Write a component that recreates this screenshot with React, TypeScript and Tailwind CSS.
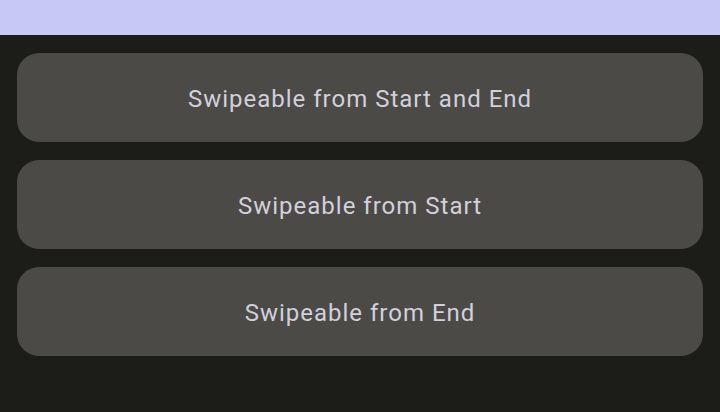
import React from 'react';

const items = [
    'Swipeable from Start and End',
    'Swipeable from Start',
    'Swipeable from End',
];

const App: React.FC = () => {
    return (
        <div className="w-[720px] h-[412px] flex flex-col bg-[#1c1c18] font-['Roboto',sans-serif]">
            <div className="h-[35px] bg-[#c8c8f6]" />
            <div className="flex flex-col gap-[18px] px-[17px] pt-[18px]">
                {items.map((label) => (
                    <div
                        key={label}
                        className="h-[89px] pt-[2px] rounded-[22px] bg-[#4b4a47] flex items-center justify-center text-[24px] tracking-[1px] text-[#d2d0dc]"
                    >
                        {label}
                    </div>
                ))}
            </div>
        </div>
    );
};

export default App;
